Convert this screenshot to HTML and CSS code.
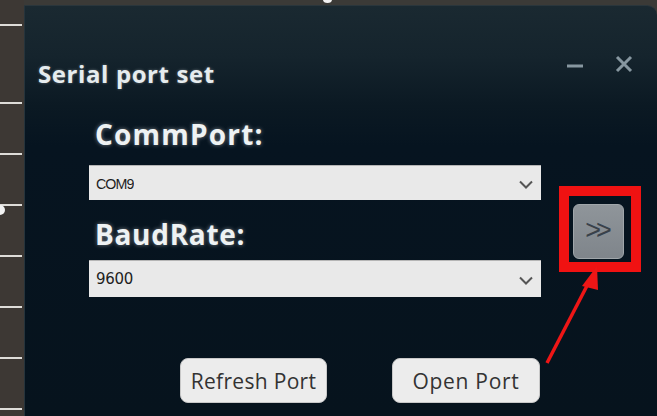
FILE: index.html
```html
<!DOCTYPE html>
<html>
<head>
<meta charset="utf-8">
<link rel="stylesheet" href="styles.css">
</head>
<body>
<div class="screen">
  <div class="ruler"><span class="dot"></span></div>
  <div class="dialog">
    <div class="titlebar">
      <div class="title">Serial port set</div>
      <div class="controls">
        <svg class="ctl min" width="18" height="18" viewBox="0 0 18 18"><path d="M1 10 H17" stroke="#8797a0" stroke-width="3"/></svg>
        <svg class="ctl close" width="18" height="18" viewBox="0 0 18 18"><path d="M2 2 L16 16 M16 2 L2 16" stroke="#8797a0" stroke-width="3"/></svg>
      </div>
    </div>
    <div class="content">
      <div class="fields">
        <div class="label l1">CommPort:</div>
        <div class="combo"><span class="val com">COM9</span><svg class="chev" width="14" height="9" viewBox="0 0 14 9"><path d="M1 1.5 L7 7.5 L13 1.5" fill="none" stroke="#555" stroke-width="2"/></svg></div>
        <div class="label l2">BaudRate:</div>
        <div class="combo c2"><span class="val baud">9600</span><svg class="chev" width="14" height="9" viewBox="0 0 14 9"><path d="M1 1.5 L7 7.5 L13 1.5" fill="none" stroke="#555" stroke-width="2"/></svg></div>
      </div>
      <div class="side">
        <div class="highlight">
          <div class="more">&gt;&gt;</div>
        </div>
      </div>
    </div>
    <div class="actions">
      <div class="btn refresh">Refresh Port</div>
      <div class="btn open">Open Port</div>
    </div>
  </div>
  <svg class="arrow" width="657" height="416" viewBox="0 0 657 416">
    <path d="M547 363 L590 280" stroke="#ee1616" stroke-width="3.5" fill="none"/>
    <path d="M597 266 L582 286 L598 290 Z" fill="#ee1616"/>
  </svg>
  <span class="topdot"></span>
</div>
</body>
</html>
```
FILE: styles.css
```css
html, body {
  margin: 0;
  padding: 0;
  background: #3b3a37;
}
.screen {
  position: relative;
  width: 657px;
  height: 416px;
  overflow: hidden;
  display: flex;
  padding-top: 5px;
  box-sizing: border-box;
}
.ruler {
  position: relative;
  width: 24px;
  flex: none;
  margin-top: -5px;
  background:
    linear-gradient(#dedcd8, #dedcd8) 0 24px / 22px 2px no-repeat,
    repeating-linear-gradient(to bottom, transparent 0 49px, #dedcd8 49px 51px) 0 53px / 22px 100% no-repeat,
    #3d3834;
}
.dot {
  position: absolute;
  left: -5px;
  top: 205px;
  width: 10px;
  height: 10px;
  border-radius: 50%;
  background: #f2f2f2;
}
.topdot {
  position: absolute;
  left: 323px;
  top: -4px;
  width: 9px;
  height: 7px;
  border-radius: 50%;
  background: #f2f2f2;
}
.dialog {
  flex: 1;
  display: flex;
  flex-direction: column;
  border-top-right-radius: 10px;
  border-left: 1px solid #26343c;
  border-top: 1px solid #2a363c;
  background: linear-gradient(to bottom, #1a2931 0, #15242d 50px, #0b1923 100px, #061420 140px, #06131d 100%);
  font-family: "Open Sans", "Noto Sans", sans-serif;
}
.titlebar {
  height: 83px;
  display: flex;
  justify-content: space-between;
  align-items: flex-start;
  box-sizing: border-box;
  padding: 54px 24px 0 13px;
}
.title {
  color: #e6ecee;
  font-size: 24px;
  font-weight: 700;
  letter-spacing: 0.6px;
  line-height: 28px;
  text-shadow: 0 0 3px rgba(255,255,255,0.35);
}
.controls {
  display: flex;
  gap: 31px;
  margin-top: -5px;
}
.ctl.min { margin-top: 1px; }
.content {
  display: flex;
  padding-left: 64px;
  margin-top: 30px;
}
.fields {
  width: 452px;
}
.label {
  color: #eef2f3;
  font-size: 28px;
  font-weight: 700;
  letter-spacing: 1.2px;
  line-height: 30px;
  padding-left: 6px;
  text-shadow: 0 0 4px rgba(255,255,255,0.45);
}
.l2 { letter-spacing: 0.7px; }
.l1 { margin-bottom: 16px; }
.l2 { margin-top: 19px; margin-bottom: 11px; }
.combo {
  height: 35px;
  background: #e9e9e9;
  border-top: 1px solid #b5b5b5;
  box-sizing: border-box;
  display: flex;
  align-items: center;
  justify-content: space-between;
  padding: 0 8px 0 7px;
}
.c2 { height: 37px; }
.val {
  color: #1e1e1e;
}
.com {
  font-family: "Liberation Sans", sans-serif;
  font-size: 15px;
  letter-spacing: -1px;
  transform: scaleX(0.95);
  transform-origin: left;
}
.baud {
  font-family: "DejaVu Sans", sans-serif;
  font-size: 15px;
  letter-spacing: -0.3px;
}
.chev { margin-top: 2px; }
.side {
  margin-left: 18px;
  margin-top: 67px;
}
.highlight {
  width: 82px;
  height: 86px;
  box-sizing: border-box;
  border: 10px solid #f01212;
  padding: 8px 7px 3px 4px;
}
.more {
  width: 51px;
  height: 55px;
  box-sizing: border-box;
  border-radius: 6px;
  background: linear-gradient(#8f959a, #7f858b);
  border: 1px solid #a0a6aa;
  color: #39414a;
  font-family: "Liberation Sans", sans-serif;
  font-size: 27px;
  font-weight: 300;
  letter-spacing: -5px;
  display: flex;
  align-items: center;
  justify-content: center;
  padding: 0 5px 3px 0;
}
.actions {
  display: flex;
  gap: 65px;
  padding-left: 155px;
  margin-top: 61px;
}
.btn {
  height: 45px;
  box-sizing: border-box;
  border-radius: 8px;
  background: #ececec;
  border: 1px solid #c8c8c8;
  color: #333;
  font-size: 21px;
  letter-spacing: 0.3px;
  display: flex;
  align-items: center;
  justify-content: center;
}
.refresh { width: 147px; }
.open { width: 148px; letter-spacing: 0.7px; }
.arrow {
  position: absolute;
  left: 0;
  top: 0;
  pointer-events: none;
}
```
